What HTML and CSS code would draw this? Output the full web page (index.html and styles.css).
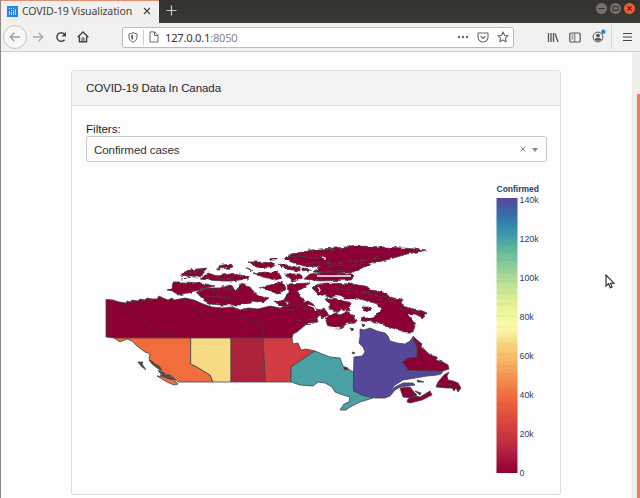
FILE: index.html
```html
<!DOCTYPE html>
<html lang="en">
<head>
<meta charset="utf-8">
<title>COVID-19 Visualization</title>
<link rel="stylesheet" href="styles.css">
</head>
<body>
<div class="window">
  <header class="titlebar">
    <div class="tab">
      <svg class="favicon" width="11" height="11" viewBox="0 0 11 11"><rect width="11" height="11" fill="#2885e8"/><g fill="#b9dcff"><path d="M2 5h1v4H2zM4 6h1v3H4zM6 4h1v5H6zM8 3h1v6H8z"/><path d="M2 2h1v1H2zM4 2h1v1H4zM6 2h1v1H6zM4 4h1v1H4z"/></g></svg>
      <span class="tab-title">COVID-19 Visualization</span>
      <svg class="tab-close" width="8" height="8" viewBox="0 0 8 8"><path d="M1 1l6 6M7 1L1 7" stroke="#444" stroke-width="1.1"/></svg>
    </div>
    <svg class="new-tab" width="11" height="11" viewBox="0 0 11 11"><path d="M5.5 .5v10M.5 5.5h10" stroke="#ccc" stroke-width="1.2"/></svg>
    <div class="window-buttons">
      <span class="wbtn"><svg width="11" height="11" viewBox="0 0 11 11"><path d="M2.5 5.5h6" stroke="#35332f" stroke-width="1.1"/></svg></span>
      <span class="wbtn"><svg width="11" height="11" viewBox="0 0 11 11"><rect x="3" y="3.5" width="5" height="4" fill="none" stroke="#35332f"/></svg></span>
      <span class="wbtn wbtn-close"><svg width="11" height="11" viewBox="0 0 11 11"><path d="M3.5 3.5l4 4M7.5 3.5l-4 4" stroke="#542314" stroke-width="1.1"/></svg></span>
    </div>
  </header>
  <nav class="toolbar">
    <span class="back"><svg width="12" height="12" viewBox="0 0 12 12"><path d="M11 6H1.2M5.4 1.8L1.2 6l4.2 4.2" fill="none" stroke="#a0a0a0" stroke-width="1.3"/></svg></span>
    <svg class="forward" width="12" height="12" viewBox="0 0 12 12"><path d="M1 6h9.8M6.6 1.8L10.8 6l-4.2 4.2" fill="none" stroke="#aaa" stroke-width="1.3"/></svg>
    <svg class="reload" width="12" height="12" viewBox="0 0 12 12"><path d="M9.6 8.7A4.3 4.3 0 1 1 9.3 3" fill="none" stroke="#444" stroke-width="1.5"/><path d="M11 .8v4.6H6.5z" fill="#444"/></svg>
    <svg class="home" width="12" height="12" viewBox="0 0 12 12"><path d="M.6 6.2L6 1l5.4 5.2M2.4 5.4v5.4h7.2V5.4" fill="none" stroke="#444" stroke-width="1.4"/><path d="M5 11V7h2v4" fill="none" stroke="#444"/></svg>
    <div class="urlbar">
      <svg width="10" height="11" viewBox="0 0 10 11"><path d="M5 .7L9 2v3c0 2.7-1.7 4.3-4 5.3C2.7 9.3 1 7.7 1 5V2z" fill="none" stroke="#666"/><path d="M5 2.7L3.1 3.3V5c0 1.500.8 2.500 1.900 3.200z" fill="#666"/></svg>
      <span class="divider"></span>
      <svg width="10" height="12" viewBox="0 0 10 12"><path d="M1 .9h4.700L9 4.200V11H1zM5.500 1v3.500H9" fill="none" stroke="#666"/></svg>
      <span class="url">127.0.0.1<span class="port">:8050</span></span>
      <svg class="dots" width="12" height="4" viewBox="0 0 12 4"><g fill="#666"><circle cx="2" cy="2" r="1.200"/><circle cx="6" cy="2" r="1.200"/><circle cx="10" cy="2" r="1.200"/></g></svg>
      <svg class="pocket" width="12" height="11" viewBox="0 0 12 11"><path d="M1 1h10v4a5 5 0 0 1-10 0zM3.600 4.200L6 6.500l2.400-2.300" fill="none" stroke="#666" stroke-width="1.100" stroke-linejoin="round"/></svg>
      <svg class="star" width="12" height="12" viewBox="0 0 12 12"><path d="M6 .9l1.500 3.400 3.700.4-2.800 2.500.8 3.700L6 9l-3.200 1.900.8-3.700L.8 4.700l3.700-.4z" fill="none" stroke="#666" stroke-width="1.100" stroke-linejoin="round"/></svg>
    </div>
    <svg class="library" width="12" height="11" viewBox="0 0 12 11"><path d="M1.500 1v9M4 1v9M6.500 1v9M8 1.500l3 8.500" stroke="#555" stroke-width="1.300"/></svg>
    <svg class="sidebar" width="12" height="11" viewBox="0 0 12 11"><rect x=".8" y="1" width="10.400" height="9" rx="1.300" fill="none" stroke="#555" stroke-width="1.200"/><path d="M5.800 1v9M2.500 3.200h2M2.500 5h2M2.500 6.800h2" stroke="#666" stroke-width=".9"/></svg>
    <svg class="account" width="14" height="14" viewBox="0 0 14 14"><circle cx="6" cy="8" r="4.900" fill="none" stroke="#555"/><circle cx="6" cy="6.600" r="1.900" fill="#555"/><path d="M2.600 10.300c1-1.900 5.800-1.900 6.800 0-1.200 2-5.600 2-6.800 0z" fill="#555"/><circle cx="11.400" cy="2.800" r="2.200" fill="#1687f2"/></svg>
    <span class="menu-divider"></span>
    <svg class="menu" width="9" height="10" viewBox="0 0 9 10"><path d="M0 1.500h9M0 5h9M0 8.500h9" stroke="#444" stroke-width="1.200"/></svg>
  </nav>
  <div class="viewport">
    <main class="page">
      <section class="card">
        <h1 class="card-header">COVID-19 Data In Canada</h1>
        <div class="card-body">
          <div class="label">Filters:</div>
          <div class="select">
            <span class="select-value">Confirmed cases</span>
            <svg width="6" height="6" viewBox="0 0 6 6"><path d="M.6.6l4.800 4.800M5.400.6L.6 5.400" stroke="#888"/></svg>
            <span class="caret"></span>
          </div>
          <svg class="chart" width="460" height="316" viewBox="86 169 460 316">
            <defs>
              <linearGradient id="spectral" x1="0" y1="1" x2="0" y2="0">
                <stop offset="0" stop-color="#8f0035"/><stop offset=".1" stop-color="#be2941"/><stop offset=".2" stop-color="#df4c3e"/><stop offset=".28" stop-color="#f36b3e"/><stop offset=".36" stop-color="#f59a54"/><stop offset=".46" stop-color="#f7d17a"/><stop offset=".53" stop-color="#fbfbaa"/><stop offset=".62" stop-color="#e5f193"/><stop offset=".71" stop-color="#addb98"/><stop offset=".81" stop-color="#62b99b"/><stop offset=".89" stop-color="#338bb0"/><stop offset=".95" stop-color="#3b66aa"/><stop offset="1" stop-color="#55479a"/>
              </linearGradient>
              <filter id="rugged" x="-2%" y="-5%" width="104%" height="110%" color-interpolation-filters="sRGB">
                <feTurbulence type="fractalNoise" baseFrequency=".15 .25" numOctaves="2" seed="7" result="n"/>
                <feDisplacementMap in="SourceGraphic" in2="n" scale="4" xChannelSelector="R" yChannelSelector="G"/>
              </filter>
            </defs>
            <g class="regions">
              <path class="c0" d="M106 299.500L113 300 119 302 126 303 127 301 130 302 132 300 138 301 140 299 145 300 147 298 152 299 157 299 159 296 163 298 168 300 172 298 174 300 185 298 194 300 203 304 212 307 222 308 232 307 240 310 248 308 258 309 270 306 280 308 287 306 289 303 284 300 286 296 300 297 304 299 302 303 308 301 313 304 316 309 322 310 321 314 317 318 318 322 308 323 303 327 297 332 293 334 292 338H114L106 337z"/>
              <path class="c1" d="M114 338H190.700V364L197 367 210 375 213 382H178L172 376 165 374 160 370 156 366 149 359 150 354 145 352 137 346 132 341 127 339 120 342z"/>
              <path class="c2" d="M190.700 338H231V382H213L210 375 197 367 190.700 364z"/>
              <path class="c3" d="M231 338H263L265.500 382H231z"/>
              <path class="c4" d="M263 338H292L293 344 298 343 301 350 306 349 315 351 291 367V382H265.500z"/>
              <path class="c5" d="M315 351L322 354 330 357 340 358 343 366 350 370 353.500 372V390L362 395 373 398 360 402 350 407 346 410 340 410 344 404 349 402 350 397 343 395 335 392 332 387 325 383 318 382 313 386 300 385 291 382V367z"/>
              <path class="c6" d="M360 329L364 330 370 328 377 331 385 333 388 336 390 341 397 343 405 344 410 341 413 337 414 342 417 347 417 357 408 358 402 362 407 368 408 370.500 443 371 441 374 437 375 427 376 415 378 403 380 395 385 389 391 395 387 403 383 413 383 415 385 400 387 395 390 390 396 385 398H375L362 395 353.500 391V372L354 357 362 356 365 352 363 347 359 343 360 337z"/>
              <path class="c0" d="M413 336L417 340 422 344 421 347 427 352 430 355 437 357 436 360 443 362 448 365 449 369 443 371 408 370.500 407 368 402 362 408 358 417 357 417 347 414 342z"/>
              <path class="c0" d="M449 372L444 375 438 382 436 387 447 388 452 388 454 391 456 388 458 392 461 388 458 383 453 381 448 380 447 376zM400 388L410 387 414 392 417 395 412 398 403 397zM408 399L413 396 420 397 430 391 432 395 422 400 410 403 407 402zM415 391L421 393 420 395zM417 380L424 382 418 382z"/>
            </g>
            <g class="regions rugged">
              <path class="c0" d="M167 289L172 287 173 281 183 281 200 282 215 285 205 287 195 290 188 292 178 294 173 290zM196 291L207 287 220 287 230 284 237 290 240 283 250 285 253 291 267 298 263 302 253 300 240 304 220 304 210 303 203 299 200 295zM180 274L188 269 207 267 200 275 188 275zM200 278L208 272 217 275 230 273 248 275 247 278 232 280 220 280zM218 265L230 263 233 265 230 267 218 268z"/>
              <path class="c0" d="M248 261L260 261 273 262 275 265 270 267 257 266zM270 257.500H276V259H270zM278 263L288 264 300 267 300 270 285 268zM246 267L253 269 251 270zM253 272L267 271 278 271 282 277 275 279 263 276zM284 273L300 273 303 278 292 280zM260 287L270 284 283 281 286 288 278 293 270 290zM287 283L310 282 305 286 298 290 300 296 304 301 298 305 291 302 286 297 288 291zM275 300L285 300 288 305 278 304zM265 296L269 297 266 299z"/>
              <path class="c0" d="M285 257L292 253 307 250 320 248 350 246 360 245 383 246 403 247 427 249 407 253 390 258 370 263 358 269 350 272 330 272 313 271 320 266 303 265 288 260zM302 267L310 268 309 270 302 271z"/>
              <path class="c0" d="M310 273L330 271 352 274 354 276 351 279 320 280 304 278z"/>
              <path class="c0" d="M312 287L315 284 327 282 350 283 365 285 370 289 383 291 393 297 403 298 401 302 408 307 420 309 427 312 423 317 415 313 407 313 413 320 415 325 413 331 405 331 395 328 387 325 377 321 361 320 362 317 373 317 377 313 382 308 378 303 367 300 357 297 347 298 340 294 330 296 318 293z"/>
              <path class="c0" d="M325 298L333 297 341 299 350 303 349 310 342 308 337 312 329 308 329 303zM327 316L334 312 340 314 346 310 351 314 358 318 355 322 346 323 340 327 328 326 326 320zM362 306L370 306 372 308 365 310zM318 310L324 307 329 314 322 317z"/>
            </g>
            <g class="regions">
              <path class="c0" d="M350 328l4 1-2 2zM362 324l3 1-2 2zM352 352l3 1-2 1zM344 367l4 1-1 2-3-1z"/>
              <path class="c1" d="M157 376L165 377 173 379 178 384 174 385 167 382z"/>
              <path class="rock" d="M138 362L143 362 142 364 146 370 141 366zM149 360L152 361 155 364 159 366 162 370 157 368 152 364zM158 370L164 373 165 376 160 373zM160 375L169 375 176 380 169 379z"/>
            </g>
            <g class="borders">
              <path d="M124 303l1 6 7 2 3 4 6 5 6 2 6 7 9 4 9 2 2 3M187 298v8l13 6 20 5 20 1 22 4 1 17M230 285v13h-10"/>
            </g>
            <g class="coast rugged">
              <path d="M200 288l8 0 5 1 9 0M206 295l12 1 11 0M181 278l10-2 7 0 6-2M205 277l10-1 8 2 10-1M224 289l9-2 7 1M232 305l8 4 7 0 5-4M276 307l10 2 8 0M183 272l12-1 8-2M125 302l9-1 10-2 8 0"/>
              <path d="M286 256l12-1 16 2 10-2M308 249l18 0 20-3M305 263l14-2 14 2 18-3 18-1 10-3M326 266l12-2 14 1 12-3M314 270l12 1 10-2 13 1"/>
              <path d="M335 287l10 2 7 0 6 3M362 291l8 1 7 3 9 1 8 3M378 298l9 2 9 2M400 307l10 3 9 1 6 1M303 308l10 0 5 3M303 324l8-1 5-3M297 320l9-2 6 1"/>
              <path d="M412 390l4 5 8 2M437 383l8 0 8 2M414 339l4 5 5 3 5 6 9 4 8 6"/>
            </g>
            <g class="water">
              <path d="M317 276h34M322 257l3 1 0 2M318 287l2 3-1 2M308 305l6 2 2 4"/>
            </g>
            <text class="scale-title" x="496.500" y="192" textLength="42.500" lengthAdjust="spacingAndGlyphs">Confirmed</text>
            <rect x="496.500" y="198" width="21" height="275" fill="url(#spectral)"/>
            <g class="bands"><path d="M497 207h20M497 216h20M497 235h20M497 243h20M497 251h20M497 260h20M497 272h20M497 281h20M497 293h20M497 304h20M497 316h20M497 327h20M497 344h20M497 354h20M497 366h20M497 374h20M497 391h20M497 404h20M497 417h20M497 424h20M497 434h20M497 443h20M497 455h20M497 463h20"/></g>
            <g class="ticks"><text x="519.500" y="203">140k</text><text x="519.500" y="242">120k</text><text x="519.500" y="281">100k</text><text x="519.500" y="320">80k</text><text x="519.500" y="359">60k</text><text x="519.500" y="398">40k</text><text x="519.500" y="437">20k</text><text x="519.500" y="476">0</text></g>
          </svg>
        </div>
      </section>
    </main>
    <aside class="scroll-track"><span class="scroll-thumb"></span></aside>
    <svg class="pointer" width="10" height="15" viewBox="0 0 10 15"><path d="M1 1v11l2.600-2.300 1.700 4 1.800-.8-1.600-3.700H9z" fill="#fff" stroke="#222" stroke-width="1.100"/></svg>
  </div>
</div>
</body>
</html>
```
FILE: styles.css
```css
* { box-sizing: border-box; }
body { margin: 0; font-family: "Liberation Sans", Arial, sans-serif; color: #212529; }
svg { display: block; flex: none; }
.window { width: 640px; height: 498px; display: flex; flex-direction: column; overflow: hidden; border-left: 1px solid #8b8987; background: #fefdfe; }
.titlebar { height: 23px; flex: none; display: flex; align-items: flex-start; background: linear-gradient(#34322e, #3b3935); }
.tab { width: 158px; height: 23px; display: flex; align-items: center; padding: 0 0 2px 6px; background: #f1f0ef; border-top: 1px solid #e58d70; }
.tab-title { width: 109px; margin-left: 4px; font: 10.600px "Noto Sans", sans-serif; letter-spacing: -.14px; color: #444; white-space: nowrap; }
.tab-close { margin-left: 12px; }
.new-tab { margin: 5px 0 0 7px; }
.window-buttons { margin: 3px 5px 0 auto; display: flex; gap: 3px; }
.wbtn { width: 11px; height: 11px; border-radius: 50%; background: #74716c; }
.wbtn-close { background: #ed5b32; }
.toolbar { height: 29px; flex: none; display: flex; align-items: center; background: #f2f1f0; border-bottom: 1px solid #cfcecd; padding-left: 2px; }
.back { width: 24px; height: 24px; flex: none; display: flex; align-items: center; justify-content: center; border: 1px solid #c5c4c3; border-radius: 50%; background: #f8f7f6; }
.forward { margin-left: 5px; }
.reload { margin-left: 11px; }
.home { margin-left: 10px; }
.urlbar { width: 392px; height: 21px; margin-left: 33px; display: flex; align-items: center; flex: none; padding-left: 5px; border: 1px solid #bcbbba; border-radius: 3px; background: #fff; }
.divider { width: 1px; height: 15px; margin: 0 5px; background: #ccc; }
.url { margin-left: 6px; font: 11.200px "Noto Sans", sans-serif; letter-spacing: -.25px; color: #333; }
.port { color: #888; }
.dots { margin-left: auto; }
.pocket { margin-left: 8px; }
.star { margin: 0 4px 0 8px; }
.library { margin-left: 33px; }
.sidebar { margin-left: 10px; }
.account { margin: -3px 0 0 11px; }
.menu-divider { width: 1px; height: 24px; margin: 0 11px 0 5px; background: #d4d3d2; }
.viewport { position: relative; flex: 1; display: flex; min-height: 0; }
.page { flex: 1; padding: 18px 71px 0 70px; background: #fefdfe; }
.card { width: 490px; height: 425px; border: 1px solid #dedddd; border-radius: 3px; background: #fefdfe; }
.card-header { height: 35px; margin: 0; padding-left: 14px; display: flex; align-items: center; border-bottom: 1px solid #dedddd; background: #f4f3f3; font-size: 11.500px; font-weight: 400; letter-spacing: -.08px; }
.card-body { padding: 15px 14px 0; }
.label { height: 15px; line-height: 16px; font-size: 11.700px; letter-spacing: -.05px; }
.select { width: 461px; height: 26px; display: flex; align-items: center; padding: 0 8px 0 7px; border: 1px solid #c8c8c8; border-radius: 3px; font-size: 11.600px; letter-spacing: -.1px; }
.select-value { flex: 1; color: #333; }
.caret { margin: 2px 0 0 6px; border: 3.500px solid transparent; border-top: 4px solid #888; border-bottom: 0; }
.chart { margin-top: 7px; }
.scroll-track { width: 8px; display: flex; justify-content: flex-end; align-items: flex-end; background: #efeeed; }
.scroll-thumb { width: 3px; height: calc(100% - 42px); background: #f27d52; }
.pointer { position: absolute; left: 604px; top: 222px; }
.regions path { stroke: #444; stroke-width: .8; stroke-linejoin: round; }
.rugged { filter: url(#rugged); transform: translateY(1px); }
.c0 { fill: #8d0035; }
.c1 { fill: #f16d3d; }
.c2 { fill: #f8d984; }
.c3 { fill: #ad233d; }
.c4 { fill: #d23b42; }
.c5 { fill: #49a0a5; }
.c6 { fill: #55489a; }
.rock { fill: #5c4a40; }
.borders path, .coast path { fill: none; stroke: #444; stroke-width: .8; }
.borders path { stroke: #55283e; }
.coast path { stroke-width: 1; stroke-dasharray: 5 1 3 2; }
.water path { fill: none; stroke: #fefdfe; stroke-width: 1.300; }
.scale-title { font-size: 8.500px; font-weight: 700; fill: #2a3f5f; }
.ticks text { font-size: 8.800px; fill: #2a3f5f; }
.bands path { stroke: #333; stroke-opacity: .07; }
```
